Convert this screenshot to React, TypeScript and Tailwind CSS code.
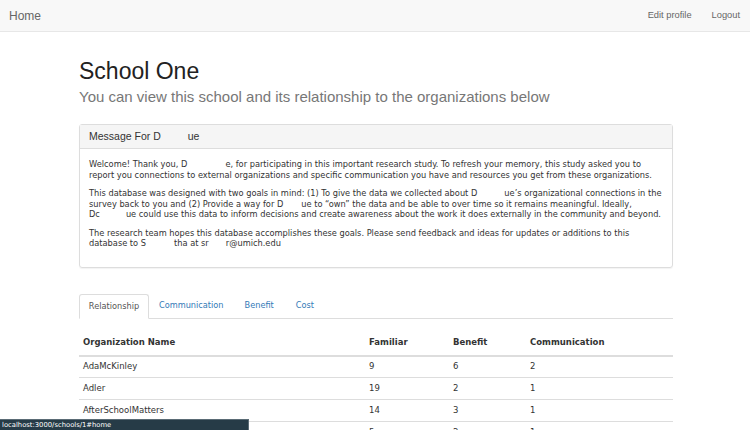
import React from "react";

const Blank = ({ w }: { w: number }) => (
  <span className="inline-block" style={{ width: w }} />
);

const rows = [
  ["AdaMcKinley", "9", "6", "2"],
  ["Adler", "19", "2", "1"],
  ["AfterSchoolMatters", "14", "3", "1"],
  ["Alpha", "5", "2", "1"],
];

export default function App() {
  return (
    <div className="relative w-[750px] h-[430px] overflow-hidden bg-white font-['Liberation_Sans',Arial,sans-serif]">
      <nav className="h-[32px] bg-[#f8f8f8] border-b border-[#e7e7e7] flex items-center justify-between px-[9px] text-[#666] text-[12px]">
        <span>Home</span>
        <div className="flex gap-[20px] text-[9.3px] pr-[1px]">
          <span>Edit profile</span>
          <span>Logout</span>
        </div>
      </nav>

      <div className="ml-[79px] w-[594px]">
        <h1 className="mt-[25px] text-[23px] leading-[28px] text-[#222]">School One</h1>
        <p className="mt-[2px] text-[15px] leading-[20px] text-[#777]">
          You can view this school and its relationship to the organizations below
        </p>

        <div className="mt-[17px] border border-[#ddd] rounded-[3px] shadow-[0_1px_1px_rgba(0,0,0,0.05)]">
          <div className="h-[24px] bg-[#f5f5f5] border-b border-[#ddd] flex items-center px-[9px] text-[10.5px] text-[#333]">
            Message For D<Blank w={27} />ue
          </div>
          <div className="px-[9px] pt-[10px] pb-[18px] font-['DejaVu_Sans',Verdana,sans-serif] text-[8.25px] leading-[10.5px] text-[#333] whitespace-nowrap">
            <p className="mb-[8px]">
              Welcome! Thank you, D<Blank w={38} />e, for participating in this important research study. To refresh your memory, this study asked you to
              <br />
              report you connections to external organizations and specific communication you have and resources you get from these organizations.
            </p>
            <p className="mb-[8px]">
              This database was designed with two goals in mind: (1) To give the data we collected about D<Blank w={27} />ue’s organizational connections in the
              <br />
              survey back to you and (2) Provide a way for D<Blank w={18} />ue to “own” the data and be able to over time so it remains meaningful. Ideally,
              <br />
              Dc<Blank w={26} />ue could use this data to inform decisions and create awareness about the work it does externally in the community and beyond.
            </p>
            <p>
              The research team hopes this database accomplishes these goals. Please send feedback and ideas for updates or additions to this
              <br />
              database to S<Blank w={28} />tha at sr<Blank w={17} />r@umich.edu
            </p>
          </div>
        </div>

        <div className="mt-[26px] flex border-b border-[#ddd] h-[25px] text-[8.2px] font-['DejaVu_Sans',Verdana,sans-serif]">
          <div className="w-[70px] -mb-px bg-white border border-[#ddd] border-b-white rounded-t-[3px] flex items-center justify-center text-[#555]">
            Relationship
          </div>
          <div className="px-[10px] flex items-center text-[#337ab7]">Communication</div>
          <div className="px-[11px] flex items-center text-[#337ab7]">Benefit</div>
          <div className="px-[11px] flex items-center text-[#337ab7]">Cost</div>
        </div>

        <table className="mt-[12px] w-full text-[8.5px] text-[#333] font-['DejaVu_Sans',Verdana,sans-serif] border-collapse">
          <thead>
            <tr className="border-b-2 border-[#ddd]">
              <th className="text-left font-bold pl-[4px] h-[25px] w-[290px]">Organization Name</th>
              <th className="text-left font-bold w-[84px]">Familiar</th>
              <th className="text-left font-bold w-[77px]">Benefit</th>
              <th className="text-left font-bold">Communication</th>
            </tr>
          </thead>
          <tbody>
            {rows.map((r) => (
              <tr key={r[0]} className="border-b border-[#ddd]">
                <td className="pl-[4px] h-[22px]">{r[0]}</td>
                <td>{r[1]}</td>
                <td>{r[2]}</td>
                <td>{r[3]}</td>
              </tr>
            ))}
          </tbody>
        </table>
      </div>

      <div className="absolute left-0 bottom-0 w-[249px] h-[11px] bg-[#263b47] border-t border-r border-[#5a6b75] text-white text-[6.8px] leading-[10px] pl-[2px] font-['DejaVu_Sans',Verdana,sans-serif]">
        localhost:3000/schools/1#home
      </div>
    </div>
  );
}
